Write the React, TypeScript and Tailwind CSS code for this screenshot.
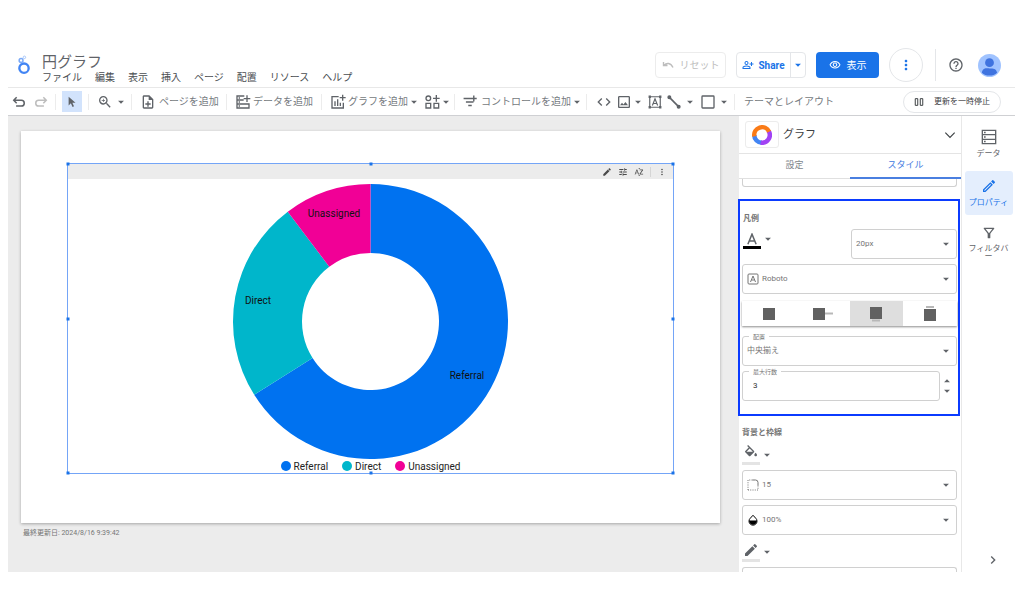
import type { ReactNode } from 'react';
import {
  MdArrowDropDown,
  MdArrowDropUp,
  MdChevronRight,
  MdCode,
  MdEdit,
  MdHelpOutline,
  MdMoreVert,
  MdOutlineEdit,
  MdOutlineFilterAlt,
  MdOutlineImage,
  MdOutlineNoteAdd,
  MdOutlinePersonAddAlt,
  MdOutlineVisibility,
  MdSortByAlpha,
  MdTune,
  MdZoomIn,
} from 'react-icons/md';

const MENUS = ['ファイル', '編集', '表示', '挿入', 'ページ', '配置', 'リソース', 'ヘルプ'];

const SLICES = [
  { name: 'Referral', color: '#0072f0', start: 0, end: 237.75, x: 467, y: 379 },
  { name: 'Direct', color: '#00b6cb', start: 237.75, end: 323, x: 258, y: 304 },
  { name: 'Unassigned', color: '#f10096', start: 323, end: 360, x: 334, y: 217 },
];

const CX = 370.5;
const CY = 321.5;

function slicePath(start: number, end: number, outer = 137.5, inner = 68.5) {
  const at = (deg: number, r: number) => {
    const a = (deg * Math.PI) / 180;
    return `${CX + r * Math.sin(a)} ${CY - r * Math.cos(a)}`;
  };
  const large = end - start > 180 ? 1 : 0;
  return `M${at(start, outer)}A${outer} ${outer} 0 ${large} 1 ${at(end, outer)}L${at(end, inner)}A${inner} ${inner} 0 ${large} 0 ${at(start, inner)}Z`;
}

function Svg({ className, box = 24, children }: { className?: string; box?: number; children: ReactNode }) {
  return (
    <svg viewBox={`0 0 ${box} ${box}`} fill="none" stroke="currentColor" strokeWidth="2" className={className} aria-hidden="true">
      {children}
    </svg>
  );
}

function Group({ className, children }: { className: string; children: ReactNode }) {
  return (
    <div className={`flex h-4 shrink-0 items-center border-r border-[#ececec] ${className}`}>{children}</div>
  );
}

function Caret() {
  return <MdArrowDropDown className="-mx-px size-3.5 shrink-0" />;
}

function UndoIcon({ className }: { className: string }) {
  return (
    <Svg className={className}>
      <path strokeWidth="2.6" d="M8 4 3 9l5 5M4 9h12a5 5 0 0 1 0 10H7" />
    </Svg>
  );
}

function Header() {
  return (
    <header className="flex h-[47px] shrink-0 items-start border-b border-[#e8e8e8]">
      <Svg className="mt-[13px] ml-1.5 size-5 shrink-0 text-[#4285f4]">
        <circle cx="12" cy="17" r="5.6" strokeWidth="2.8" />
        <circle cx="8.500" cy="7.800" r="2.300" strokeWidth="1.800" stroke="#7baaf7" />
        <circle cx="12.500" cy="4" r="1.500" strokeWidth="1.200" stroke="#a8c7fa" />
      </Svg>
      <div className="mt-[11px] ml-2 min-w-0 flex-1">
        <h1 className="text-[15px] leading-5 text-[#5f6368]">円グラフ</h1>
        <nav className="flex gap-[13px] text-[10px] leading-3 whitespace-nowrap text-[#4a4d51]">
          {MENUS.map((m) => (
            <button key={m} type="button">{m}</button>
          ))}
        </nav>
      </div>
      <div className="flex h-full shrink-0 items-center pt-0.5 pr-3.5">
        <button type="button" disabled className="mr-2.5 flex h-[26px] w-[71px] items-center justify-center gap-1.5 rounded border border-[#ececec] text-[10px] text-[#bdbdbd]">
          <Svg className="size-3">
            <path strokeWidth="2.8" d="M3 6v7h8M4 13c5-6 13-6 18 4" />
          </Svg>
          リセット
        </button>
        <div className="mr-2.5 flex h-[26px] w-[70px] rounded border border-[#e4e6e9] text-[#1a73e8]">
          <button type="button" className="flex flex-1 items-center justify-center gap-1 border-r border-[#e4e6e9] text-[10px] font-bold">
            <MdOutlinePersonAddAlt className="size-3" />
            Share
          </button>
          <button type="button" aria-label="共有オプション" className="flex w-3.5 items-center justify-center">
            <MdArrowDropDown className="size-3.5" />
          </button>
        </div>
        <button type="button" className="mr-2.5 flex h-[26px] w-[63px] items-center justify-center gap-1.5 rounded bg-[#1a73e8] text-[10px] text-white">
          <MdOutlineVisibility className="size-3" />
          表示
        </button>
        <button type="button" aria-label="その他" className="mr-3 flex size-[34px] items-center justify-center rounded-full border border-[#e4e6e9] text-[#1a73e8]">
          <MdMoreVert className="size-4" />
        </button>
        <div className="mr-3 h-8 border-r border-[#e4e6e9]" />
        <button type="button" aria-label="ヘルプ" className="mr-3.5 text-[#5f6368]">
          <MdHelpOutline className="size-4" />
        </button>
        <button type="button" aria-label="アカウント">
          <svg viewBox="0 0 24 24" className="size-[23px]" aria-hidden="true">
            <circle cx="12" cy="12" r="12" fill="#a0c3ff" />
            <circle cx="12" cy="9" r="4.6" fill="#3f73df" />
            <path d="M4 19.5c1-5 4-4.5 8-4.5s7 0 8 4.5c-4 4-12 4-16 0Z" fill="#3f73df" />
          </svg>
        </button>
      </div>
    </header>
  );
}

function Toolbar() {
  return (
    <div role="toolbar" className="flex h-7 shrink-0 items-center border-b border-[#cfd0d3] text-[10px] whitespace-nowrap text-[#5f6368]">
      <Group className="w-12 gap-2 pl-1">
        <button type="button" aria-label="元に戻す"><UndoIcon className="size-3.5" /></button>
        <button type="button" aria-label="やり直し" className="text-[#bdbdbd]"><UndoIcon className="size-3.5 -scale-x-100" /></button>
      </Group>
      <Group className="w-[33px] justify-center">
        <button type="button" aria-label="選択" className="flex h-[21px] w-5 items-center justify-center bg-[#d2e3fc]">
          <svg viewBox="0 0 12 16" className="h-3 w-2.5" fill="currentColor" aria-hidden="true">
            <path d="M1.5 1v11.5l3-2.7 2.2 5 2-1-2.2-4.7h4.2Z" />
          </svg>
        </button>
      </Group>
      <Group className="w-[43px] pl-2">
        <button type="button" aria-label="ズーム" className="flex items-center gap-0.5"><MdZoomIn className="size-4" /><Caret /></button>
      </Group>
      <Group className="w-[95px] pl-2">
        <button type="button" className="flex items-center gap-[3px]">
          <MdOutlineNoteAdd className="size-4" />
          <span className="text-[#757a80]">ページを追加</span>
        </button>
      </Group>
      <Group className="w-[95px] pl-2">
        <button type="button" className="flex items-center gap-0.5">
          <Svg className="size-4">
            <path d="M14 3H3v18h18v-6H3M3 9h10M15 15h6M18 2v10M13 7h10" />
            <path strokeWidth="2.5" d="M5.5 6h2M5.5 12h2M5.5 18h2" />
          </Svg>
          <span className="text-[#757a80]">データを追加</span>
        </button>
      </Group>
      <Group className="w-[133px] gap-1 pl-2">
        <button type="button" className="flex items-center">
          <Svg className="mr-0.5 size-4">
            <path d="M13 4H3v17h17v-8M7.5 11v7M11.5 8v10M15.5 13v5M19 1v9M14.500 5.500h9" />
          </Svg>
          <span className="text-[#757a80]">グラフを追加</span>
          <Caret />
        </button>
        <button type="button" aria-label="コミュニティ" className="flex items-center">
          <Svg className="size-4">
            <circle cx="6.500" cy="6.500" r="3.500" />
            <path d="M3 14h7v7H3zM15 14h7v7h-7zM18.500 1.500v10M13.500 6.500h10" />
          </Svg>
          <Caret />
        </button>
      </Group>
      <Group className="w-[132px] pl-2">
        <button type="button" className="flex items-center">
          <Svg className="mr-1 size-3.5">
            <path strokeWidth="2.400" d="M1 6h13M5 12h13M9 18h6M18.500 1v10M14 6h9.500" />
          </Svg>
          <span className="text-[#757a80]">コントロールを追加</span>
          <Caret />
        </button>
      </Group>
      <Group className="w-[148px] gap-1 pl-[9px]">
        <button type="button" aria-label="埋め込み"><MdCode className="size-4" /></button>
        <button type="button" aria-label="画像" className="flex items-center"><MdOutlineImage className="size-4" /><Caret /></button>
        <button type="button" aria-label="テキスト">
          <Svg className="size-3.5">
            <path d="M3 3h18v18H3z" />
            <path fill="currentColor" stroke="none" d="M1 1h4v4H1zM19 1h4v4h-4zM1 19h4v4H1zM19 19h4v4h-4z" />
            <path d="M7.500 18 12 6.500 16.500 18M9 14.500h6" />
          </Svg>
        </button>
        <button type="button" aria-label="線" className="flex items-center gap-0.5">
          <Svg className="size-4">
            <path strokeWidth="2.5" d="m4 4 16 16" />
            <circle cx="5" cy="5" r="2" fill="currentColor" />
            <circle cx="19" cy="19" r="2" fill="currentColor" />
          </Svg>
          <Caret />
        </button>
        <button type="button" aria-label="図形" className="flex items-center gap-0.5">
          <Svg className="size-4"><rect x="3" y="3" width="18" height="18" rx="1" /></Svg>
          <Caret />
        </button>
      </Group>
      <button type="button" className="ml-[9px] text-[#757a80]">テーマとレイアウト</button>
      <button type="button" className="mr-3.5 ml-auto flex h-[22px] w-[98px] items-center justify-center gap-2.5 rounded-full border border-[#e4e6e9] text-[8px] text-[#3c4043]">
        <Svg className="size-2.5"><path strokeWidth="2.400" d="M3 4h6v16H3zM15 4h6v16h-6z" /></Svg>
        更新を一時停止
      </button>
    </div>
  );
}

const HANDLES = [
  'top-0 left-0', 'top-0 left-1/2', 'top-0 left-full',
  'top-1/2 left-0', 'top-1/2 left-full',
  'top-full left-0', 'top-full left-1/2', 'top-full left-full',
];

function Canvas() {
  return (
    <main className="flex min-w-0 flex-1 flex-col bg-[#ececec] pt-[15px] pr-[19px] pl-[13px]">
      <div className="flex min-h-0 flex-1 flex-col bg-white pt-8 pr-[46px] pb-[49px] pl-[46px] shadow-[0_1px_3px_rgba(0,0,0,0.3)]">
        <section className="relative flex min-h-0 flex-1 flex-col border border-[#74a5f7]">
          {HANDLES.map((h) => (
            <span key={h} className={`absolute size-[3px] -translate-1/2 bg-[#1a73e8] ${h}`} />
          ))}
          <div className="flex h-[15px] shrink-0 items-center justify-end gap-1.5 bg-[#ececec] pr-1.5 text-[#4a4a4a]">
            <button type="button" aria-label="編集"><MdEdit className="size-2.5" /></button>
            <button type="button" aria-label="調整"><MdTune className="size-2.5" /></button>
            <button type="button" aria-label="並べ替え"><MdSortByAlpha className="size-2.5" /></button>
            <span className="h-2.5 border-r border-[#d5d5d5]" />
            <button type="button" aria-label="メニュー"><MdMoreVert className="size-2.5" /></button>
          </div>
          <svg viewBox="233 184 275 275" className="mt-[5px] min-h-0 w-full flex-1" role="img" aria-label="円グラフ">
            {SLICES.map((s) => (
              <path key={s.name} d={slicePath(s.start, s.end)} fill={s.color} />
            ))}
            {SLICES.map((s) => (
              <text key={s.name} x={s.x} y={s.y} textAnchor="middle" fontSize="10" fill="#111">{s.name}</text>
            ))}
          </svg>
          <ul className="flex h-3.5 shrink-0 items-center justify-center gap-3.5 text-[10px] text-[#222]">
            {SLICES.map((s) => (
              <li key={s.name} className="flex items-center gap-[3px]">
                <svg viewBox="0 0 10 10" className="size-2.5"><circle cx="5" cy="5" r="5" fill={s.color} /></svg>
                {s.name}
              </li>
            ))}
          </ul>
        </section>
      </div>
      <p className="mt-1 h-[45px] shrink-0 pl-0.5 text-[7px] leading-3 text-[#757575]">最終更新日: 2024/8/16 9:39:42</p>
    </main>
  );
}

function SelectBox({ label, value, icon, legend, className = '' }: {
  label: string; value: string; icon?: ReactNode; legend?: boolean; className?: string;
}) {
  return (
    <div className={`relative flex h-[30px] shrink-0 items-center rounded-[3px] border border-[#d0d0d0] bg-white pr-[3px] pl-1 text-[#757575] ${className}`}>
      {legend && <span aria-hidden="true" className="absolute -top-1 left-1.5 bg-white px-1 text-[6px] leading-2">{label}</span>}
      {icon}
      <select aria-label={label} defaultValue={value} className="h-5 min-w-0 flex-1 appearance-none bg-transparent text-[8px] leading-5 outline-none">
        <option>{value}</option>
      </select>
      <MdArrowDropDown className="size-3.5 text-[#5f6368]" />
    </div>
  );
}

function ColorButton({ label, bar, children }: { label: string; bar: string; children: ReactNode }) {
  return (
    <button type="button" aria-label={label} className="flex h-5 shrink-0 items-center text-[#5f6368]">
      <span className={`flex h-5 w-[18px] items-start justify-center border-b-3 ${bar}`}>{children}</span>
      <MdArrowDropDown className="size-3.5" />
    </button>
  );
}

function LegendPositions() {
  const items = [
    { name: 'なし', mark: '', x: 6, y: 4 },
    { name: '右', mark: 'M14 9.500h8', x: 2, y: 4 },
    { name: '下', mark: 'M8 16.500h8', x: 6, y: 3 },
    { name: '上', mark: 'M8 3h8', x: 6, y: 5 },
  ];
  return (
    <div className="mt-[7px] grid h-[25px] grid-cols-4 shadow-[0_1px_2px_rgba(0,0,0,0.45)]">
      {items.map((it, i) => (
        <button key={it.name} type="button" aria-label={it.name} className={`flex items-center justify-center ${i === 2 ? 'bg-[#dedede]' : ''}`}>
          <svg viewBox="0 0 24 20" className="h-5 w-6 overflow-visible" aria-hidden="true">
            {it.mark && <path d={it.mark} stroke="#b8b8b8" strokeWidth="2" />}
            <rect x={it.x} y={it.y} width="12" height="12" fill="#616161" />
          </svg>
        </button>
      ))}
    </div>
  );
}

function Panel() {
  return (
    <aside className="flex w-[223px] shrink-0 flex-col border-r border-[#e8e8e8] bg-white">
      <button type="button" className="flex h-[38px] shrink-0 items-center border-b border-[#e4e4e4] px-1.5 text-[11px] text-[#3c4043]">
        <span className="mr-1 flex h-[27px] w-[34px] items-center justify-center rounded-[3px] border border-[#ececec]">
          <svg viewBox="233 184 275 275" className="size-5" aria-hidden="true">
            <path d={slicePath(180, 270, 137.5, 76)} fill="#4285f4" />
            <path d={slicePath(60, 190, 137.5, 76)} fill="#a142f4" />
            <path d={slicePath(260, 425, 137.5, 76)} fill="#fa7b17" />
          </svg>
        </span>
        <span className="pt-0.5">グラフ</span>
        <Svg className="-mr-0.5 ml-auto size-3.5"><path d="m4 8 8 8 8-8" /></Svg>
      </button>
      <div role="tablist" className="grid h-[25px] shrink-0 grid-cols-2 border-b border-[#e0e0e0] text-[9px]">
        <button type="button" role="tab" aria-selected="false" className="text-[#80868b]">設定</button>
        <button type="button" role="tab" aria-selected="true" className="-mb-px border-b-2 border-[#4a7fe0] text-[#3f7ae0]">スタイル</button>
      </div>
      <div className="-ml-px flex min-h-0 flex-1 flex-col overflow-hidden">
        <div className="mr-1 mb-3 ml-1 h-2 shrink-0 rounded-b-[3px] border border-t-0 border-[#d0d0d0]" />
        <section className="mr-px shrink-0 border-2 border-[#0b3bff] pt-3 pr-px pb-[13px] pl-0.5">
          <h2 className="pl-px text-[8px] leading-3 font-bold text-[#757575]">凡例</h2>
          <div className="mt-1 flex justify-between">
            <div className="flex pl-px">
              <ColorButton label="文字の色" bar="border-black">
                <svg viewBox="0 0 16 16" className="mt-1 size-3" fill="none" stroke="currentColor" strokeWidth="2" aria-hidden="true">
                  <path d="M2.500 15 8 1.500 13.500 15M4.500 10.500h7" />
                </svg>
              </ColorButton>
            </div>
            <SelectBox label="文字サイズ" value="20px" className="w-[106px]" />
          </div>
          <SelectBox
            label="フォント"
            value="Roboto"
            className="mt-[5px]"
            icon={
              <Svg className="mr-[3px] size-3">
                <rect x="2" y="2" width="20" height="20" rx="2" />
                <path d="M7 18 12 6l5 12M9 14h6" />
              </Svg>
            }
          />
          <LegendPositions />
          <SelectBox label="配置" value="中央揃え" legend className="mt-2.5" />
          <div className="mt-[5px] flex items-center">
            <label className="relative flex h-[30px] w-[198px] items-center rounded-[3px] border border-[#d0d0d0] pl-2.5">
              <span className="absolute -top-1 left-1.5 bg-white px-1 text-[6px] leading-2 text-[#757575]">最大行数</span>
              <input type="text" inputMode="numeric" defaultValue="3" className="h-5 w-full bg-transparent text-[8px] leading-5 text-[#333] outline-none" />
            </label>
            <div className="flex flex-col -space-y-1 text-[#5f6368]">
              <button type="button" aria-label="増やす"><MdArrowDropUp className="size-3.5" /></button>
              <button type="button" aria-label="減らす"><MdArrowDropDown className="size-3.5" /></button>
            </div>
          </div>
        </section>
        <section className="flex shrink-0 flex-col pt-[11px] pr-1 pl-1">
          <h2 className="text-[8px] leading-3 font-bold text-[#757575]">背景と枠線</h2>
          <div className="mt-1.5 flex h-[25px] items-start">
            <ColorButton label="背景の色" bar="border-[#e4e4e4]">
              <svg viewBox="0 0 24 24" className="size-4" fill="currentColor" aria-hidden="true">
                <path d="M16.560 8.940 7.620 0 6.210 1.410l2.380 2.380-5.150 5.150a1.490 1.490 0 0 0 0 2.120l5.500 5.500c.29.29.68.44 1.060.44s.77-.15 1.060-.44l5.500-5.500c.59-.58.59-1.530 0-2.120zM5.210 10 10 5.210 14.790 10H5.210zM19 11.500s-2 2.170-2 3.500c0 1.100.9 2 2 2s2-.9 2-2c0-1.330-2-3.500-2-3.500z" />
              </svg>
            </ColorButton>
          </div>
          <SelectBox
            label="枠線の半径"
            value="15"
            icon={
              <Svg className="mr-[3px] size-3">
                <path strokeDasharray="2 2.500" d="M2 22V2h9M2 22h20v-9" />
                <path d="M11 2h6a5 5 0 0 1 5 5v6" />
              </Svg>
            }
          />
          <SelectBox
            label="不透明度"
            value="100%"
            className="mt-[5px]"
            icon={
              <Svg className="mr-[3px] size-3 text-black">
                <path d="M12 2.500 6.500 8.500a8 8 0 1 0 11 0Z" />
                <path fill="currentColor" stroke="none" d="M4 13h16c0 5-4 8.500-8 8.500S4 18 4 13Z" />
              </Svg>
            }
          />
          <div className="mt-[7px] flex h-[25px] items-start">
            <ColorButton label="枠線の色" bar="border-[#e4e4e4]"><MdEdit className="size-4" /></ColorButton>
          </div>
          <div className="h-2 rounded-t-[3px] border border-b-0 border-[#d0d0d0]" />
        </section>
      </div>
    </aside>
  );
}

function Rail() {
  return (
    <nav className="flex w-[53px] shrink-0 flex-col items-center bg-white pt-[13px] text-[8px] leading-2.5 text-[#5f6368]">
      <button type="button" className="flex flex-col items-center gap-1">
        <Svg className="size-4">
          <path d="M2 2h20v20H2zM2 8.500h20M2 15.500h20" />
          <path strokeWidth="2.500" d="M4.500 5.300h2.500M4.500 12h2.500M4.500 18.700h2.500" />
        </Svg>
        データ
      </button>
      <button type="button" className="mt-3 flex h-11 w-12 flex-col items-center justify-center gap-1 rounded-[3px] bg-[#e4eefd] text-[#1a73e8]">
        <MdOutlineEdit className="size-4" />
        プロパティ
      </button>
      <button type="button" className="mt-2.5 flex w-10 flex-col items-center gap-1 leading-2">
        <MdOutlineFilterAlt className="size-4" />
        <span className="w-10 break-all">フィルタバー</span>
      </button>
      <button type="button" aria-label="折りたたむ" className="mt-auto mb-1 ml-2"><MdChevronRight className="size-4" /></button>
    </nav>
  );
}

export default function App() {
  return (
    <div className="flex h-screen flex-col overflow-hidden bg-white pt-[41px] pr-[9px] pb-[42px] pl-2 font-['Roboto','Noto_Sans_CJK_JP',sans-serif]" lang="ja">
      <Header />
      <Toolbar />
      <div className="flex min-h-0 flex-1">
        <Canvas />
        <Panel />
        <Rail />
      </div>
    </div>
  );
}
